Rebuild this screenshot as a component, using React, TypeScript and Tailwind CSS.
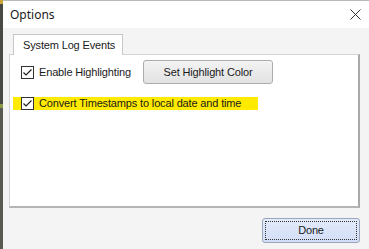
import React from 'react'

const Check = () => (
  <div className="w-[13px] h-[13px] border border-[#333333] bg-white flex items-center justify-center shrink-0">
    <svg width="11" height="11" viewBox="0 0 11 11">
      <path d="M1.5 5.5 L4 8 L9.5 2.5" fill="none" stroke="#222222" strokeWidth="1.2" />
    </svg>
  </div>
)

export default function App() {
  return (
    <div className="w-[369px] h-[249px] flex overflow-hidden bg-[#f4f4f4] tracking-[-0.15px]" style={{ fontFamily: '"Liberation Sans", Arial, sans-serif' }}>
      {/* background window edge */}
      <div className="w-[3px] h-full bg-[#5a5a52] flex flex-col">
        <div className="h-[4px] bg-[#c9a53a]" />
        <div className="h-[100px] bg-[#4a4a44]" />
        <div className="h-[4px] bg-[#8a9a4a]" />
      </div>

      <div className="flex-1 flex flex-col border-t border-[#b9b9b9]">
        {/* Title bar */}
        <div className="h-[27px] bg-white flex items-center justify-between pl-[7px] pr-[8px]">
          <span className="text-[12px] text-[#1a1a1a] tracking-normal" style={{ fontFamily: '"Noto Sans", sans-serif' }}>Options</span>
          <svg width="11" height="11" viewBox="0 0 11 11">
            <path d="M0.5 0.5 L10.5 10.5 M10.5 0.5 L0.5 10.5" stroke="#333333" strokeWidth="1" />
          </svg>
        </div>

        {/* Body */}
        <div className="flex-1 flex flex-col pt-[6px] pl-[6px] pr-[9px]">
          <div className="flex">
            <div className="ml-[4px] w-[110px] h-[21px] -mb-px bg-white border border-b-0 border-[#c8c8c8] flex items-center pl-[9px] text-[11px] text-[#1a1a1a] relative z-10">
              System Log Events
            </div>
          </div>
          <div className="h-[154px] bg-white border-t border-l border-[#d4d4d4] border-r-2 border-b-2 border-r-[#a9a9a9] border-b-[#b4b4b4] flex flex-col">
            <div className="flex items-center pt-[5px] pl-[11px]">
              <Check />
              <span className="ml-[5px] text-[11px] text-[#1a1a1a] w-[104px]">Enable Highlighting</span>
              <button className="w-[130px] h-[24px] rounded-[3px] border border-[#adadad] bg-gradient-to-b from-[#f3f3f3] to-[#e2e2e2] text-[11px] text-[#1a1a1a]">
                Set Highlight Color
              </button>
            </div>
            <div className="mt-[13px] ml-[3px] w-[245px] h-[13px] bg-[#ffea00] flex items-center pl-[8px]">
              <Check />
              <span className="ml-[5px] text-[11px] text-[#1a1a1a]">Convert Timestamps to local date and time</span>
            </div>
          </div>

          <div className="flex justify-end mt-[10px]">
            <button className="w-[98px] h-[25px] rounded-[3px] border border-[#9aa6bb] bg-gradient-to-b from-[#e3ebfb] to-[#d3def6] p-[2px]">
              <div className="w-full h-full border border-dotted border-[#333333] flex items-center justify-center text-[11px] text-[#1a1a1a]">
                Done
              </div>
            </button>
          </div>
        </div>
      </div>
    </div>
  )
}
